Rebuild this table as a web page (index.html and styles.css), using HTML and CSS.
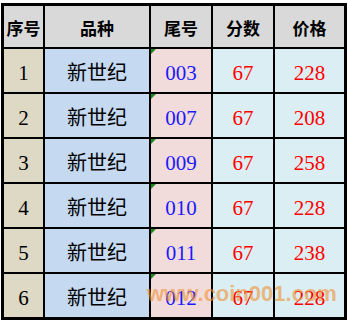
FILE: index.html
```html
<!DOCTYPE html>
<html lang="zh">
<head>
<meta charset="utf-8">
<link rel="stylesheet" href="styles.css">
</head>
<body>
<div class="sheet">
  <div class="grid">
    <div class="cell head">序号</div>
    <div class="cell head">品种</div>
    <div class="cell head">尾号</div>
    <div class="cell head">分数</div>
    <div class="cell head">价格</div>

    <div class="cell c1">1</div><div class="cell c2">新世纪</div><div class="cell c3"><span class="tri"></span>003</div><div class="cell c4">67</div><div class="cell c5">228</div>
    <div class="cell c1">2</div><div class="cell c2">新世纪</div><div class="cell c3"><span class="tri"></span>007</div><div class="cell c4">67</div><div class="cell c5">208</div>
    <div class="cell c1">3</div><div class="cell c2">新世纪</div><div class="cell c3"><span class="tri"></span>009</div><div class="cell c4">67</div><div class="cell c5">258</div>
    <div class="cell c1">4</div><div class="cell c2">新世纪</div><div class="cell c3"><span class="tri"></span>010</div><div class="cell c4">67</div><div class="cell c5">228</div>
    <div class="cell c1">5</div><div class="cell c2">新世纪</div><div class="cell c3"><span class="tri"></span>011</div><div class="cell c4">67</div><div class="cell c5">238</div>
    <div class="cell c1">6</div><div class="cell c2">新世纪</div><div class="cell c3"><span class="tri"></span>012</div><div class="cell c4">67</div><div class="cell c5">228</div>
  </div>
  <div class="watermark">www.coin001.com</div>
</div>
</body>
</html>
```

FILE: styles.css
```css
html, body {
  margin: 0;
  padding: 0;
  background: #ffffff;
}
.sheet {
  position: relative;
  width: 349px;
  height: 321px;
  overflow: hidden;
}
.grid {
  display: grid;
  grid-template-columns: 39px 104px 60px 60px 69px;
  grid-template-rows: 41px repeat(6, 43px);
  gap: 2px;
  padding: 3px;
  background: #000000;
  width: max-content;
  margin: 3px 0 0 1px;
}
.cell {
  position: relative;
  display: flex;
  align-items: center;
  justify-content: center;
  font-family: "Liberation Serif", "Noto Sans CJK SC", serif;
  font-size: 21px;
  color: #000000;
  padding-top: 5px;
  box-sizing: border-box;
}
.head {
  background: #d9d9d9;
  font-family: "Noto Sans CJK SC", sans-serif;
  font-weight: 700;
  font-size: 17px;
  padding-top: 1px;
}
.c1 { background: #ddd9c4; }
.c2 {
  background: #c5d9f1;
  font-family: "Noto Sans CJK SC", sans-serif;
  font-size: 20px;
  padding-top: 2px;
}
.c3 { background: #f2dcdb; color: #1a1aff; }
.c4, .c5 { background: #daeef3; color: #ff0000; }
.tri {
  position: absolute;
  left: 0;
  top: 0;
  width: 0;
  height: 0;
  border-top: 5px solid #1a8a1a;
  border-right: 5px solid transparent;
}
.watermark {
  position: absolute;
  left: 147px;
  top: 281px;
  font-family: "Liberation Sans", Arial, sans-serif;
  font-weight: 700;
  font-size: 22px;
  color: rgba(240, 145, 50, 0.6);
  white-space: nowrap;
}
```
